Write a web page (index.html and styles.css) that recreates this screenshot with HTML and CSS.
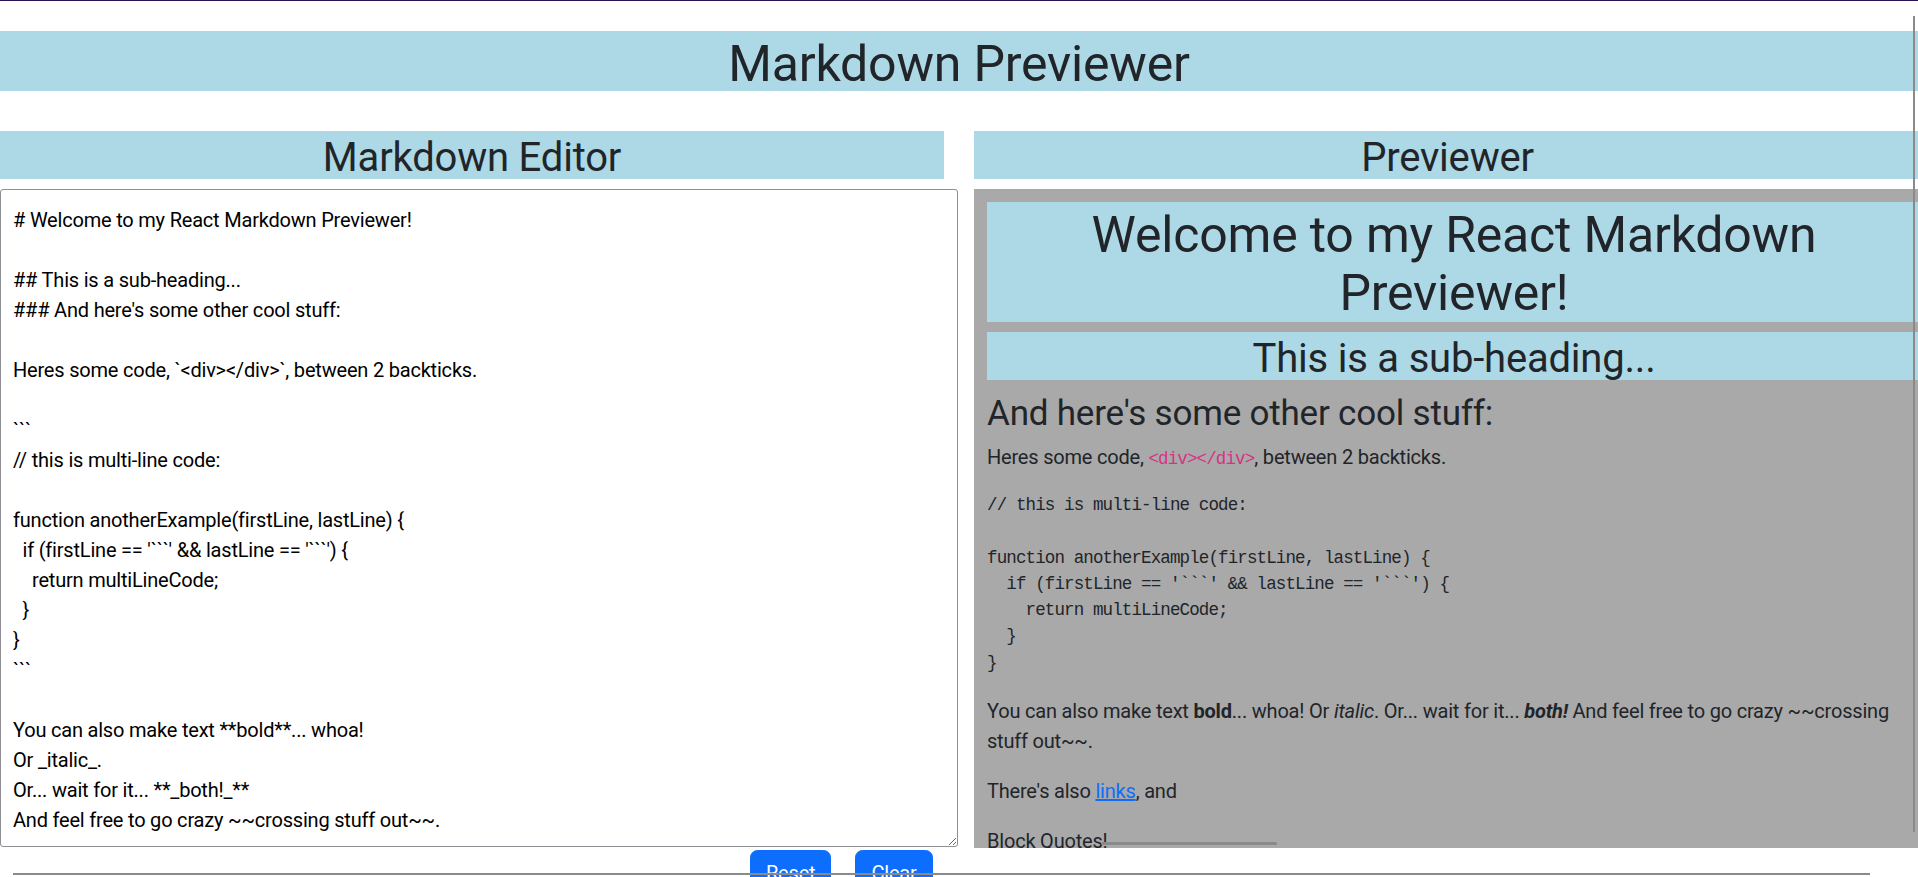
FILE: index.html
```html
<!DOCTYPE html>
<html lang="en">
<head>
<meta charset="utf-8">
<title>Markdown Previewer</title>
<link rel="stylesheet" href="styles.css">
</head>
<body>
<div class="topline"></div>
<h1 class="title">Markdown Previewer</h1>
<main class="panes">
  <section class="pane pane-editor">
    <h2 class="pane-title">Markdown Editor</h2>
    <textarea class="editor" spellcheck="false"># Welcome to my React Markdown Previewer!

## This is a sub-heading...
### And here's some other cool stuff:

Heres some code, &#96;&lt;div&gt;&lt;/div&gt;&#96;, between 2 backticks.

&#96;&#96;&#96;
// this is multi-line code:

function anotherExample(firstLine, lastLine) {
  if (firstLine == '&#96;&#96;&#96;' &amp;&amp; lastLine == '&#96;&#96;&#96;') {
    return multiLineCode;
  }
}
&#96;&#96;&#96;

You can also make text **bold**... whoa!
Or _italic_.
Or... wait for it... **_both!_**
And feel free to go crazy ~~crossing stuff out~~.

There's also [links](https://www.freecodecamp.org), and
&gt; Block Quotes!

And if you want to get really crazy, even tables:</textarea>
  </section>
  <section class="pane pane-preview">
    <h2 class="pane-title">Previewer</h2>
    <div class="preview-wrap">
      <div class="preview">
        <h1>Welcome to my React Markdown Previewer!</h1>
        <h2>This is a sub-heading...</h2>
        <h3>And here's some other cool stuff:</h3>
        <p>Heres some code, <code>&lt;div&gt;&lt;/div&gt;</code>, between 2 backticks.</p>
<pre><code>// this is multi-line code:

function anotherExample(firstLine, lastLine) {
  if (firstLine == '&#96;&#96;&#96;' &amp;&amp; lastLine == '&#96;&#96;&#96;') {
    return multiLineCode;
  }
}</code></pre>
        <p>You can also make text <strong>bold</strong>... whoa! Or <em>italic</em>. Or... wait for it... <strong><em>both!</em></strong> And feel free to go crazy ~~crossing stuff out~~.</p>
        <p>There's also <a href="#">links</a>, and</p>
        <blockquote>Block Quotes!</blockquote>
        <p>And if you want to get really crazy, even tables:</p>
      </div>
      <div class="preview-hthumb"></div>
    </div>
  </section>
</main>
<div class="actions">
  <button class="btn" type="button">Reset</button>
  <button class="btn" type="button">Clear</button>
</div>
<div class="page-vthumb"></div>
<div class="page-hthumb"></div>
</body>
</html>
```
FILE: styles.css
```css
html, body {
  margin: 0;
  padding: 0;
  width: 1918px;
  height: 877px;
  overflow: hidden;
  background: #fff;
}

body {
  font-family: Roboto, "Liberation Sans", sans-serif;
  font-size: 20px;
  line-height: 1.5;
  color: #212529;
  letter-spacing: -0.01em;
  position: relative;
}

.topline {
  height: 1px;
  background: #2b1250;
}

.title {
  margin: 30px 0 40px;
  padding-top: 7.2px;
  font-size: 50px;
  line-height: 52.8px;
  font-weight: 400;
  text-align: center;
  background: #add8e6;
}

.panes {
  display: grid;
  grid-template-columns: 958px 960px;
  column-gap: 16px;
  margin: 0;
  width: 1934px;
}

.pane-title {
  margin: 0 0 10px;
  padding-top: 5.76px;
  font-size: 40px;
  line-height: 42.24px;
  font-weight: 400;
  text-align: center;
  background: #add8e6;
}

.pane-editor .pane-title {
  width: 944px;
}

.pane-preview .pane-title {
  width: 947px;
}

.editor {
  display: block;
  box-sizing: border-box;
  width: 958px;
  height: 658px;
  margin: 0;
  padding: 15px 12px;
  border: 1px solid #8f8f96;
  border-radius: 3px;
  font-family: Roboto, "Liberation Sans", sans-serif;
  font-size: 20px;
  line-height: 1.5;
  letter-spacing: -0.01em;
  color: #000;
  background: #fff;
  overflow: hidden;
  resize: both;
  outline: none;
}

.preview-wrap {
  position: relative;
}

.preview {
  box-sizing: border-box;
  height: 659px;
  padding: 13px;
  background: #a9a9a9;
  overflow: hidden;
}

.preview h1 {
  margin: 0 0 10px;
  padding-top: 5.4px;
  font-size: 50px;
  line-height: 57.3px;
  font-weight: 400;
  text-align: center;
  background: #add8e6;
}

.preview h2 {
  margin: 0 0 10px;
  padding-top: 5.76px;
  font-size: 40px;
  line-height: 42.24px;
  font-weight: 400;
  text-align: center;
  background: #add8e6;
}

.preview h3 {
  margin: 0 0 10px;
  padding-top: 5px;
  font-size: 35px;
  line-height: 37px;
  font-weight: 400;
}

.preview p {
  margin: 0 0 20px;
}

.preview blockquote {
  margin: 0 0 20px;
}

.preview code {
  font-family: "Liberation Mono", "DejaVu Sans Mono", monospace;
  font-size: 0.875em;
  letter-spacing: -0.05em;
  color: #d63384;
}

.preview pre {
  margin: 0 0 20px;
  font-family: "Liberation Mono", "DejaVu Sans Mono", monospace;
  font-size: 17.5px;
  line-height: 1.5;
  letter-spacing: -0.875px;
  white-space: pre;
}

.preview pre code {
  font-size: inherit;
  color: inherit;
  letter-spacing: inherit;
}

.preview a {
  color: #0d6efd;
  text-decoration: underline;
}

.preview strong {
  font-weight: 700;
}

.preview-hthumb {
  position: absolute;
  left: 127px;
  top: 653px;
  width: 176px;
  height: 3px;
  border-radius: 2px;
  background: #8a8a8a;
}

.actions {
  display: flex;
  gap: 24px;
  margin-top: 2px;
  padding-left: 750px;
}

.btn {
  font-family: Roboto, "Liberation Sans", sans-serif;
  font-size: 20px;
  line-height: 1.5;
  letter-spacing: -0.01em;
  padding: 7.5px 15px;
  border: 1px solid #0d6efd;
  border-radius: 7.5px;
  background: #0d6efd;
  color: #fff;
}

.page-vthumb {
  position: absolute;
  left: 1913px;
  top: 16px;
  width: 2px;
  height: 816px;
  background: #8a8a8a;
}

.page-hthumb {
  position: absolute;
  left: 13px;
  top: 873px;
  width: 1857px;
  height: 2px;
  background: #8a8a8a;
}
```
